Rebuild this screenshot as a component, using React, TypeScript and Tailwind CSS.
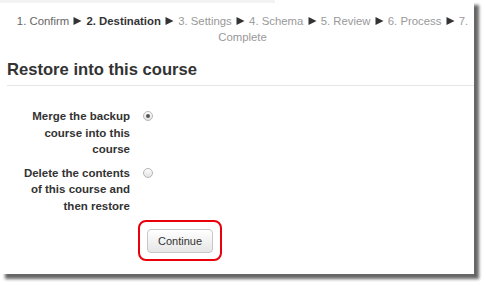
import React from 'react';

const steps = [
  { n: '1. Confirm', state: 'done' },
  { n: '2. Destination', state: 'current' },
  { n: '3. Settings', state: 'todo' },
  { n: '4. Schema', state: 'todo' },
  { n: '5. Review', state: 'todo' },
  { n: '6. Process', state: 'todo' },
  { n: '7. Complete', state: 'todo' },
];

function Arrow() {
  return (
    <svg width="9" height="8" viewBox="0 0 9 8" className="mx-[1px] inline-block align-[0px]">
      <path d="M0.5 0 L8.5 4 L0.5 8 Z" fill="#333" />
    </svg>
  );
}

function Radio({ checked }: { checked?: boolean }) {
  return (
    <span className="mt-[3px] flex h-[10px] w-[10px] items-center justify-center rounded-full border border-[#b5b5b5] bg-gradient-to-b from-[#fdfdfd] to-[#e3e3e3]">
      {checked && <span className="h-[4px] w-[4px] rounded-full bg-[#555]" />}
    </span>
  );
}

function Row({ label, checked }: { label: string; checked?: boolean }) {
  return (
    <div className="flex items-start">
      <div className="ml-[18px] w-[112px] text-right text-[11.5px] font-bold leading-[16.5px] text-[#333]">{label}</div>
      <div className="ml-[13px]">
        <Radio checked={checked} />
      </div>
    </div>
  );
}

export default function App(): React.JSX.Element {
  return (
    <div className="h-[286px] w-[486px] bg-white font-['Liberation_Sans',Arial,sans-serif]">
      <div className="h-[274px] w-[474px] bg-white shadow-[5px_5px_3px_rgba(0,0,0,0.6)]">
        <div className="h-[3px] w-[275px] bg-[#f3f3f3]" />

        <div className="ml-[10px] mt-[10px] w-[465px] text-center text-[11.35px] leading-[16px]">
          {steps.map((s, i) => (
            <React.Fragment key={s.n}>
              <span
                className={
                  s.state === 'current'
                    ? 'font-bold text-[#333]'
                    : s.state === 'done'
                      ? 'text-[#666]'
                      : 'text-[#999]'
                }
              >
                {s.n}
              </span>
              {i < steps.length - 1 && (
                <>
                  {' '}
                  <Arrow />{' '}
                </>
              )}
            </React.Fragment>
          ))}
        </div>

        <h2 className="ml-[7px] mt-[15px] border-b border-[#e5e5e5] pb-[5px] text-[16.6px] font-bold leading-[20px] text-[#333]">
          Restore into this course
        </h2>

        <div className="mt-[22px] flex flex-col gap-[7px]">
          <Row label="Merge the backup course into this course" checked />
          <Row label="Delete the contents of this course and then restore" />
        </div>

        <div className="ml-[138px] mt-[6px] inline-block rounded-[8px] border-2 border-[#e8000b] px-[7px] py-[6px]">
          <button className="h-[24px] w-[66px] rounded-[4px] border border-[#c8c8c8] bg-gradient-to-b from-white to-[#e6e6e6] text-[11px] text-[#333]">
            Continue
          </button>
        </div>
      </div>
    </div>
  );
}
